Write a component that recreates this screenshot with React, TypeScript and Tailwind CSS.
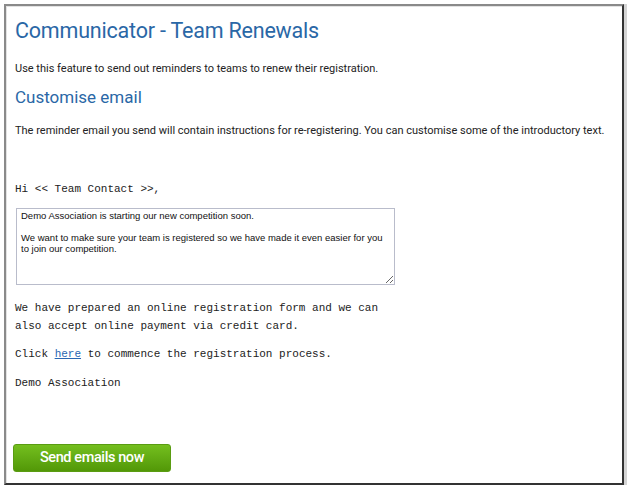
import React from "react";

const mono = "font-['Liberation_Mono','Courier_New',monospace] text-[11px] text-[#222]";

function App() {
  return (
    <div className="bg-white w-[628px] h-[490px] pt-[4px] pl-[4px]">
      <div className="w-[620px] h-[481px] border-l-2 border-t-2 border-l-[#8a8a8a] border-t-[#8a8a8a] border-r-2 border-b-2 border-r-[#333] border-b-[#333] shadow-[3px_0_0_#d4d4d4]">
        <div className="h-full border-l border-t border-[#e2e2e2] pl-[8px] pr-2 font-['Roboto',sans-serif] text-[#222] flex flex-col">
          <h1 className="mt-[10px] text-[21.5px] leading-[28px] text-[#2a67a6] tracking-[-0.2px]">
            Communicator - Team Renewals
          </h1>
          <p className="mt-[17px] text-[11px] leading-[14px]">
            Use this feature to send out reminders to teams to renew their registration.
          </p>
          <h2 className="mt-[11px] text-[17px] leading-[20px] text-[#2a67a6]">Customise email</h2>
          <p className="mt-[17px] text-[11px] leading-[14px]">
            The reminder email you send will contain instructions for re-registering. You can customise some of the introductory text.
          </p>
          <p className={`${mono} mt-[44px] leading-[14px]`}>Hi &lt;&lt; Team Contact &gt;&gt;,</p>
          <textarea
            className="mt-[12px] ml-[1px] w-[379px] h-[77px] border border-[#b9bccb] px-[4px] py-[1px] text-[9.5px] leading-[11px] font-['Liberation_Sans',Arial,sans-serif] text-[#111] resize-y outline-none"
            defaultValue={
              "Demo Association is starting our new competition soon.\n\nWe want to make sure your team is registered so we have made it even easier for you to join our competition."
            }
          />
          <p className={`${mono} mt-[14px] leading-[18px]`}>
            We have prepared an online registration form and we can
            <br />
            also accept online payment via credit card.
          </p>
          <p className={`${mono} mt-[10px] leading-[18px]`}>
            Click{" "}
            <a href="#" className="text-[#2a66b3] underline">
              here
            </a>{" "}
            to commence the registration process.
          </p>
          <p className={`${mono} mt-[11px] leading-[18px]`}>Demo Association</p>
          <button className="mt-[52px] w-[158px] h-[28px] rounded-[3px] bg-gradient-to-b from-[#74bf1e] to-[#529807] text-white text-[14.5px] font-medium font-['Roboto',sans-serif] tracking-[-0.4px] border border-[#5a9c12] self-start -ml-[2px]">
            Send emails now
          </button>
        </div>
      </div>
    </div>
  );
}

export default App;
